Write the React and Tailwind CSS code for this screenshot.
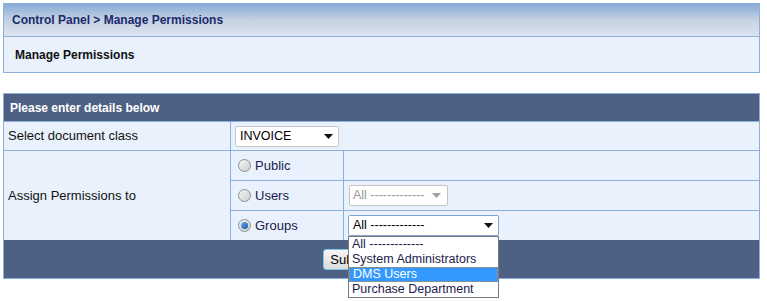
import React from "react";

function Radio({ checked }) {
  return (
    <span className="relative inline-flex h-[13px] w-[13px] items-center justify-center rounded-full border border-[#8f8f8f] bg-gradient-to-br from-[#f4f4f4] to-[#cfcfcf]">
      {checked && (
        <span className="h-[7px] w-[7px] rounded-full bg-gradient-to-br from-[#6fb3ff] to-[#1d4f9e]" />
      )}
    </span>
  );
}

function Arrow({ gray }) {
  return (
    <svg width="9" height="5" viewBox="0 0 9 5" className="shrink-0">
      <path d="M0 0 L9 0 L4.5 5 Z" fill={gray ? "#a0a0a0" : "#111"} />
    </svg>
  );
}

export default function App() {
  const groups = ["All -------------", "System Administrators", "DMS Users", "Purchase Department"];

  return (
    <div className="min-h-[301px] w-[767px] bg-white pl-[3px] pt-[3px] font-['Liberation_Sans',Arial,sans-serif] text-[12px]">
      {/* TOP PANEL */}
      <div className="w-[757px] border border-[#8cb0dc]">
        <div className="flex h-[32px] items-center bg-gradient-to-b from-[#8aabd6] via-[#c4d2e3] to-[#dce4ee] pl-[8px] font-bold text-[#1b2a6b]">
          Control Panel &gt; Manage Permissions
        </div>
        <div className="flex h-[36px] items-center border-t border-[#8cb0dc] bg-[#e8f1fc] pl-[11px] font-bold text-[#111]">
          Manage Permissions
        </div>
      </div>

      {/* FORM */}
      <div className="mt-[20px] w-[757px] border border-[#8cb0dc]">
        <div className="flex h-[28px] items-center border-b border-[#8cb0dc] bg-[#4e6184] pl-[6px] font-bold text-white">
          Please enter details below
        </div>

        {/* document class */}
        <div className="flex h-[29px] border-b border-[#8cb0dc] bg-[#e8f1fc]">
          <div className="flex w-[227px] items-center border-r border-[#8cb0dc] pl-[4px] text-[13px] text-[#111]">
            Select document class
          </div>
          <div className="flex items-center pl-[4px]">
            <div className="flex h-[21px] w-[104px] items-center justify-between rounded-[2px] border border-[#c8c8c8] bg-white pl-[4px] pr-[5px] text-[12.5px] text-black">
              INVOICE
              <Arrow />
            </div>
          </div>
        </div>

        {/* assign permissions */}
        <div className="flex bg-[#e8f1fc]">
          <div className="flex w-[227px] items-center border-r border-[#8cb0dc] pl-[4px] text-[13px] text-[#111]">
            Assign Permissions to
          </div>
          <div className="flex flex-1 flex-col">
            <div className="flex h-[30px] border-b border-[#8cb0dc]">
              <div className="flex w-[113px] items-center gap-[4px] border-r border-[#8cb0dc] pl-[7px] text-[13px] text-[#1c1c4c]">
                <Radio />
                Public
              </div>
              <div className="flex-1" />
            </div>
            <div className="flex h-[30px] border-b border-[#8cb0dc]">
              <div className="flex w-[113px] items-center gap-[4px] border-r border-[#8cb0dc] pl-[7px] text-[13px] text-[#1c1c4c]">
                <Radio />
                Users
              </div>
              <div className="flex flex-1 items-center pl-[5px]">
                <div className="flex h-[21px] w-[99px] items-center justify-between rounded-[2px] border border-[#c4c4c4] bg-white pl-[3px] pr-[6px] text-[12.5px] text-[#9a9a9a]">
                  All -------------
                  <Arrow gray />
                </div>
              </div>
            </div>
            <div className="flex h-[29px]">
              <div className="flex w-[113px] items-center gap-[4px] border-r border-[#8cb0dc] pl-[7px] text-[13px] text-[#1c1c4c]">
                <Radio checked />
                Groups
              </div>
              <div className="flex flex-1 items-center pl-[4px]">
                <div className="relative">
                  <div className="flex h-[21px] w-[151px] items-center justify-between rounded-[2px] border border-[#7fa6d4] bg-white pl-[4px] pr-[5px] text-[12.5px] text-black">
                    All -------------
                    <Arrow />
                  </div>
                  {/* OPEN DROPDOWN */}
                  <div className="absolute left-0 top-full z-10 w-[151px] border border-[#7a7a7a] bg-white text-[12.5px] leading-[15px] text-[#1c1c4c]">
                    {groups.map((g) => (
                      <div
                        key={g}
                        className={
                          "h-[15px] whitespace-nowrap px-[3px] " +
                          (g === "DMS Users"
                            ? "border border-dotted border-[#d08a3c] bg-[#3399ff] px-[2px] leading-[13px] text-white"
                            : "")
                        }
                      >
                        {g}
                      </div>
                    ))}
                  </div>
                </div>
              </div>
            </div>
          </div>
        </div>

        {/* FOOTER */}
        <div className="flex h-[38px] items-center justify-center gap-[6px] border-t border-[#4e6184] bg-[#4e6184]">
          <button className="h-[21px] w-[56px] rounded-[3px] border border-[#7ec8e3] bg-gradient-to-b from-[#f6f6f6] to-[#dcdcdc] text-[13px] text-black">
            Submit
          </button>
          <button className="h-[21px] w-[56px] rounded-[3px] border border-[#9a9a9a] bg-gradient-to-b from-[#f6f6f6] to-[#dcdcdc] text-[13px] text-black">
            Cancel
          </button>
        </div>
      </div>
    </div>
  );
}
